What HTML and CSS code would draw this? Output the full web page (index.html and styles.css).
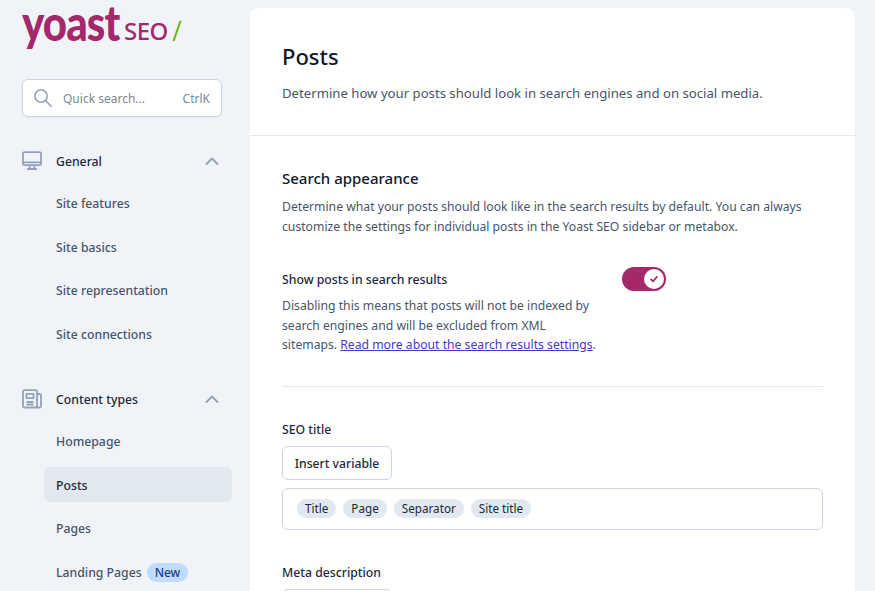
FILE: index.html
```html
<!DOCTYPE html>
<html lang="en">
<head>
<meta charset="utf-8">
<title>Yoast SEO - Posts</title>
<link rel="stylesheet" href="styles.css">
</head>
<body>
<div class="page">
  <aside class="sidebar">
    <div class="logo"><span class="logo-word">yoast</span><span class="logo-seo">SEO</span><svg class="logo-slash" viewBox="0 0 10 22" width="10" height="22"><path d="M8.5 1 1.5 21" fill="none" stroke="#77b227" stroke-width="2.2"/></svg></div>
    <div class="search">
      <svg class="search-icon" viewBox="0 0 20 20" width="20" height="20" fill="none" stroke="#94a3b8" stroke-width="1.6" stroke-linecap="round"><circle cx="8" cy="8" r="6.2"/><path d="m12.6 12.6 5.6 5.6"/></svg>
      <span class="search-text">Quick search...</span>
      <span class="search-key">CtrlK</span>
    </div>
    <nav class="nav">
      <section class="group">
        <div class="group-head">
          <svg class="group-icon" viewBox="0 0 20 20" width="20" height="20" fill="none" stroke="#94a3b8" stroke-width="1.8" stroke-linejoin="round"><rect x="1" y="1.2" width="18" height="13" rx="1.6"/><path d="M1 11.4h18M7.6 14.5v3.2M12.4 14.5v3.2M5.2 18h9.6"/></svg>
          <span class="group-title">General</span>
          <svg class="chev" viewBox="0 0 14 8" width="14" height="8" fill="none" stroke="#94a3b8" stroke-width="2" stroke-linecap="round" stroke-linejoin="round"><path d="m1.5 7 5.5-5.5L12.500 7"/></svg>
        </div>
        <a class="item">Site features</a>
        <a class="item">Site basics</a>
        <a class="item">Site representation</a>
        <a class="item">Site connections</a>
      </section>
      <section class="group">
        <div class="group-head">
          <svg class="group-icon" viewBox="0 0 20 20" width="20" height="20" fill="none" stroke="#94a3b8" stroke-width="1.8" stroke-linejoin="round"><path d="M15 18.500H2.500A1.500 1.500 0 0 1 1 17V2.500a1.300 1.300 0 0 1 1.300-1.300h11.400A1.300 1.300 0 0 1 15 2.500zm0-13.500h2.700a1.300 1.300 0 0 1 1.300 1.300V17a1.500 1.500 0 0 1-1.500 1.500H15"/><path d="M4.500 4.800h7v4.400h-7zM4.500 13h7M4.500 15.500h7"/></svg>
          <span class="group-title">Content types</span>
          <svg class="chev" viewBox="0 0 14 8" width="14" height="8" fill="none" stroke="#94a3b8" stroke-width="2" stroke-linecap="round" stroke-linejoin="round"><path d="m1.5 7 5.5-5.5L12.500 7"/></svg>
        </div>
        <a class="item">Homepage</a>
        <a class="item item-active">Posts</a>
        <a class="item">Pages</a>
        <a class="item">Landing Pages <span class="badge">New</span></a>
      </section>
    </nav>
  </aside>
  <main class="card">
    <header class="card-head">
      <h1 class="title">Posts</h1>
      <p class="lead">Determine how your posts should look in search engines and on social media.</p>
    </header>
    <div class="card-body">
      <h2 class="section-title">Search appearance</h2>
      <p class="section-text">Determine what your posts should look like in the search results by default. You can always customize the settings for individual posts in the Yoast SEO sidebar or metabox.</p>
      <div class="toggle-row">
        <div class="toggle-copy">
          <div class="label">Show posts in search results</div>
          <p class="toggle-text">Disabling this means that posts will not be indexed by search engines and will be excluded from XML sitemaps. <a class="link">Read more about the search results settings</a>.</p>
        </div>
        <div class="toggle"><span class="knob"><svg viewBox="0 0 12 12" width="10" height="10" fill="none" stroke="#a4286a" stroke-width="2" stroke-linecap="round" stroke-linejoin="round"><path d="m2.500 6.500 2.300 2.300 4.700-5.300"/></svg></span></div>
      </div>
      <hr class="rule">
      <div class="label label-field">SEO title</div>
      <button class="btn">Insert variable</button>
      <div class="input">
        <span class="pill">Title</span><span class="pill">Page</span><span class="pill">Separator</span><span class="pill">Site title</span>
      </div>
      <div class="label label-meta">Meta description</div>
      <button class="btn">Insert variable</button>
    </div>
  </main>
</div>
</body>
</html>
```

FILE: styles.css
```css
* { box-sizing: border-box; }
html, body { margin: 0; height: 591px; overflow: hidden; }
body { background: #f0f4f9; font-family: "Noto Sans", "Open Sans", sans-serif; font-size: 12.250px; color: #475569; }
.page { display: flex; height: 591px; overflow: hidden; }

.sidebar { width: 250px; flex: none; padding: 0 18px 0 22px; }
.logo { display: flex; align-items: flex-start; height: 79px; color: #a4286a; }
.logo-word { flex: none; width: 96px; font-family: "Lato", sans-serif; font-weight: 900; font-size: 50px; line-height: 50px; letter-spacing: -1px; transform: scaleX(.84); transform-origin: 0 0; margin-top: -3px; white-space: nowrap; }
.logo-seo { font-family: "Noto Sans", sans-serif; font-weight: 500; font-size: 24px; line-height: 32px; margin: 15px 0 0 6px; letter-spacing: -.5px; }
.logo-slash { margin: 20px 0 0 4px; }

.search { width: 200px; height: 38px; display: flex; align-items: center; padding: 0 11px 0 10px; background: #fff; border: 1px solid #cbd5e1; border-radius: 6px; box-shadow: 0 1px 2px rgba(0,0,0,.05); color: #7b8798; }
.search-icon { flex: none; }
.search-text { margin-left: 10px; flex: 1; font-size: 12px; }
.search-key { font-size: 12px; }

.nav { padding-top: 32px; }
.group { margin-bottom: 36px; }
.group-head { display: flex; align-items: center; height: 24px; padding-right: 13px; margin-bottom: 12px; }
.group-icon { flex: none; }
.group-title { margin-left: 14px; padding-top: 1px; flex: 1; color: #1e293b; font-weight: 500; }
.chev { flex: none; }
.item { display: flex; align-items: center; gap: 5px; height: 35px; margin: 0 0 8.670px 22px; padding: 2px 0 0 12px; border-radius: 6px; color: #475569; font-weight: 500; }
.item-active { background: #e2e8f0; color: #1e293b; }
.badge { background: #bfdbfe; color: #1e3a8a; font-size: 12px; line-height: 19px; padding: 0 8px; border-radius: 10px; }

.card { width: 605px; height: 700px; margin-top: 8px; flex: none; background: #fff; border-radius: 8px 8px 0 0; box-shadow: 0 1px 2px rgba(0,0,0,.05); }
.card-head { height: 128px; padding: 31px 32px 0; border-bottom: 1px solid #e2e8f0; }
.title { margin: 0; font-size: 22px; line-height: 34px; font-weight: 500; color: #0f172a; }
.lead { margin: 10px 0 0; line-height: 20px; font-size: 13.160px; }
.card-body { padding: 31px 32px 0; }
.section-title { margin: 0; font-size: 15px; line-height: 22px; font-weight: 500; color: #0f172a; }
.section-text { margin: 8px 0 0; line-height: 20px; font-size: 12.200px; }
.toggle-row { display: flex; margin-top: 33px; align-items: flex-start; }
.toggle-copy { width: 320px; }
.label { color: #1e293b; font-weight: 500; line-height: 20px; }
.toggle-text { margin: 6px 0 0; line-height: 19.500px; font-size: 12.200px; }
.link { color: #4338ca; text-decoration: underline; }
.toggle { width: 44px; height: 24px; margin-left: 20px; margin-top: -3px; background: #a4286a; border-radius: 12px; padding: 2px; display: flex; justify-content: flex-end; }
.knob { width: 20px; height: 20px; background: #fff; border-radius: 50%; display: flex; align-items: center; justify-content: center; }
.rule { margin: 31px 0 0; border: 0; border-top: 1px solid #e2e8f0; }
.label-field { margin-top: 33px; }
.btn { display: block; height: 34px; margin-top: 6px; padding: 1px 0 0; width: 110px; white-space: nowrap; background: #fff; border: 1px solid #cbd5e1; border-radius: 6px; font: 500 12.200px "Noto Sans", sans-serif; color: #1e293b; }
.input { display: flex; align-items: center; gap: 7px; height: 42px; margin-top: 8px; padding: 0 14px; border: 1px solid #cbd5e1; border-radius: 6px; }
.pill { background: #e2e8f0; color: #1e293b; font-size: 11.700px; line-height: 19px; padding: 0 8px; border-radius: 10px; }
.label-meta { margin-top: 33px; }
```
